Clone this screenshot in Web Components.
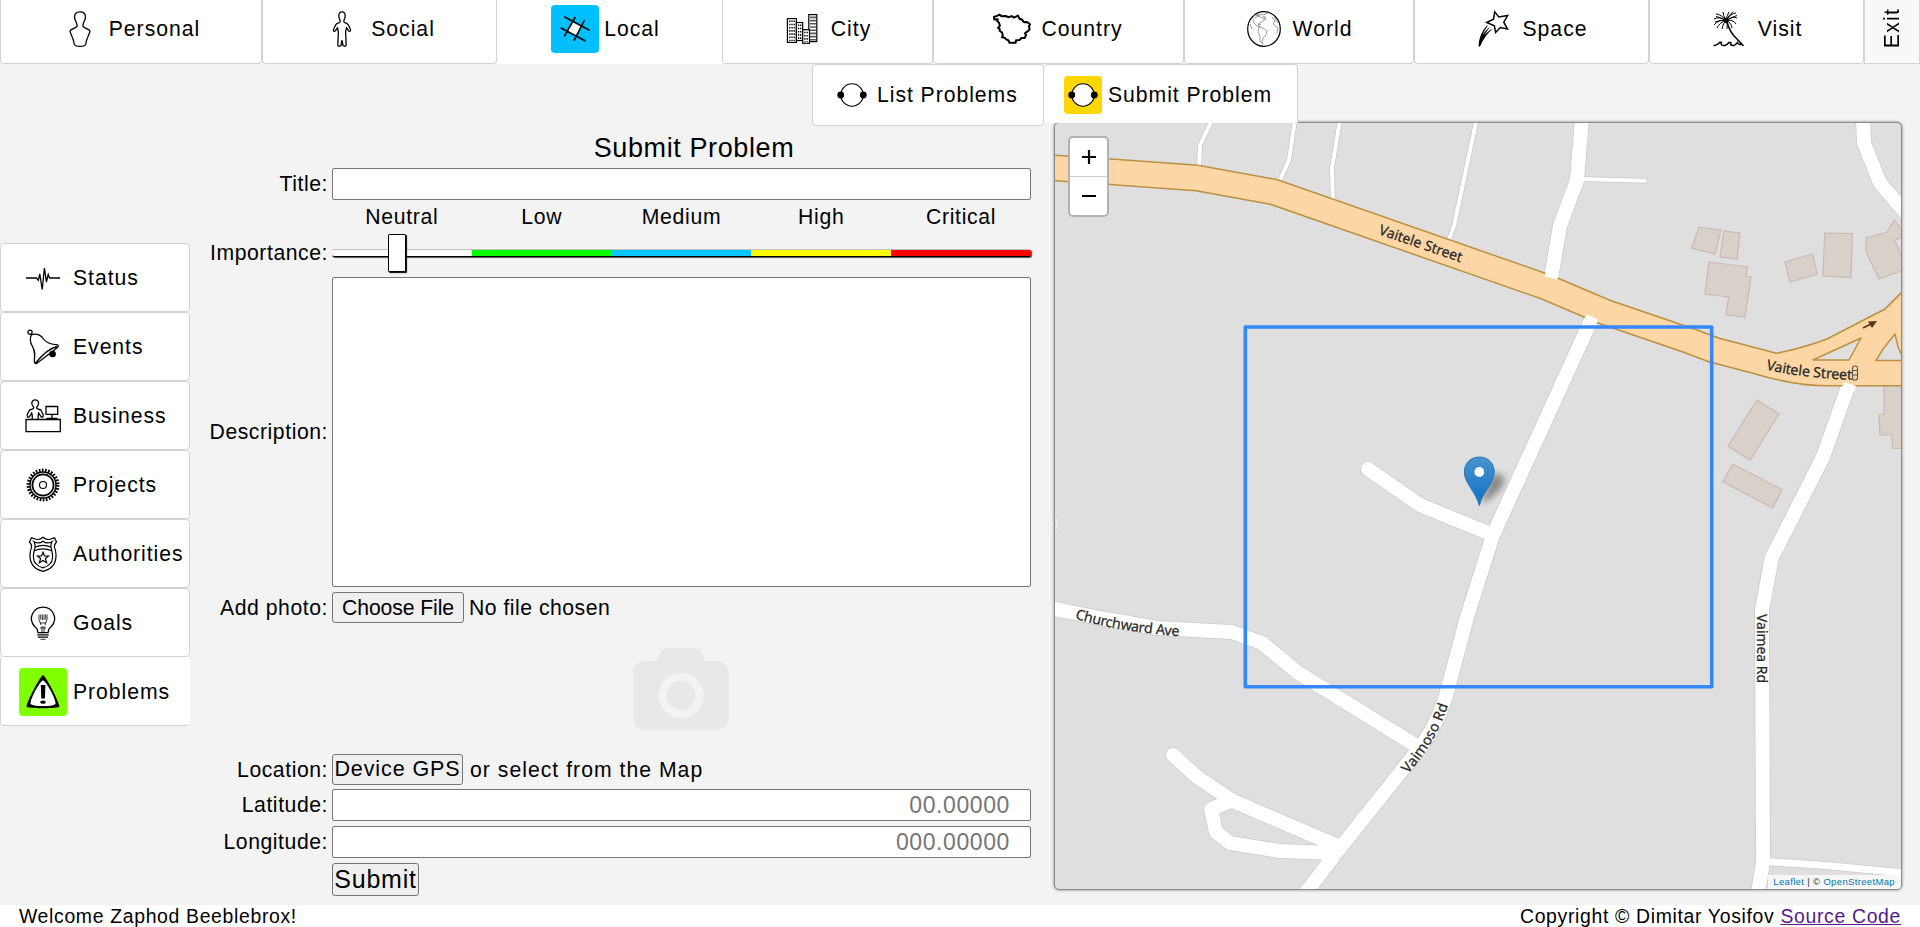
<!DOCTYPE html>
<html lang="en">
<head>
<meta charset="utf-8">
<title>Submit Problem</title>
<style>
html,body{margin:0;height:100%;background:#fff}
body{font-family:"Liberation Sans",Arial,sans-serif;font-size:21.2px;color:#000;overflow:hidden}
</style>
</head>
<body>
<civic-app></civic-app>
<script>
const ICONS = {
personal:'<path fill="#fff" d="M18 .8C21.5.8 23.5 3 23.5 6C23.5 9.5 20.8 11.5 20.8 15C21.5 17.5 28 18 28 20.3C28 22 24.5 27 23.8 33C23.5 35 21 35.3 18 35.3C15 35.3 12.5 35 12.2 33C11.5 27 8 22 8 20.3C8 18 14.5 17.5 15.2 15C15.2 11.5 12.5 9.5 12.5 6C12.5 3 14.5.8 18 .8Z"/>',
social:'<path fill="#fff" d="M18 .8C20.2.8 21.2 2.5 21.2 5C21.2 7.5 19.8 8.5 19.8 10.5C20 12.3 23.5 12 24.4 14L26.6 18.8Q26.4 21 24.8 20L22.5 16.8C21.4 20 21.4 22 21.8 25L22.2 34Q22 35.5 20.4 35.2L19 34.5L18.2 30H17.8L17 34.5L15.6 35.2Q14 35.5 13.8 34L14.2 25C14.6 22 14.6 20 13.5 16.8L11.2 20Q9.6 21 9.4 18.8L11.6 14C12.5 12 16 12.3 16.2 10.5C16.2 8.5 14.8 7.5 14.8 5C14.8 2.5 15.8.8 18 .8Z"/>',
local:'<path fill="#fff" stroke="none" d="M15.8 10.3L24.5 15L19.3 25.1L10.2 20.3Z"/><path stroke-width="1.6" d="M7.3 5.7L32.5 19.3M3.6 16.7L28.4 30M18.3 6L7.3 25.3M27.5 9L17 29.7"/>',
city:'<g stroke-width="1.2" fill="#fff"><rect x="3.4" y="7.6" width="9" height="23.8"/><rect x="12.4" y="11.5" width="6.3" height="18"/><rect x="24.8" y="3.6" width="8" height="27"/><rect x="18.7" y="18.7" width="6.8" height="13.6"/></g><g stroke-dasharray="1.6 1.6" stroke-width="1.3"><path d="M5.8 9.5V30M8 9.5V30M10.2 9.5V30M14.6 13.5V29M16.7 13.5V29M20.9 20.7V31M23.2 20.7V31M27 5.6V30M29 5.6V30M31 5.6V30"/></g>',
country:'<path stroke-width="2" stroke-linejoin="round" fill="#fff" d="M0 5.9L3 4.9L5.5 3.6L7.5 5.2L11.7 4.9L14 6.2L17.8 5.1L20 6.6L24 4.6L25.5 7.7L27.8 8.5L30 11.2L33 11L36 13.2L35 15.5L35.6 18.5L33.5 20.4L31 22.3L32 24L30.6 27.1L27.5 27L25.5 29.1L22 29.3L21.6 31.8H15.5L14.6 29.5L12.3 28.3L10.5 26.8L8 26.3L8.8 24L7.9 21.3L5.8 20L5.6 17.9L4 17L5.9 14.8L5 11.7L3.2 10L3.7 8.2L.4 8.6Z"/>',
world:'<ellipse cx="18" cy="18" rx="16.3" ry="17.3" fill="#fff" stroke-width="1.2"/><path stroke="#777" stroke-width=".7" d="M7 5L12 3L17 4L22 2M8 7L13 5L16 7L18 5L20 8L17 10L14 12L12 14L14 16L11 15L8 12L7 8M13 16L17 17L21 20L20 24L17 27L16 31L17 33L14 30L14 25L12 21Z M26 6L29 10L27 13L32 17L31 22M28 6L32 12M4 13L6 18"/><path stroke="#999" d="M10 4L14 5M12 13L15 14M17 8L19 7"/>',
space:'<path fill="#fff" stroke-width="1.5" d="M19.7.9L23.8 6L32.6 4.6L28.8 11.2L32.4 18L25.3 16.6L20.6 21.4L19.4 14.8L11.6 11.5L18.5 8.2Z"/><path fill="#000" stroke="none" d="M3.5 35.5Q4 23 11.5 15L13 14.2Q8.5 21 7.5 24Q12 17.5 15.5 15.8Q11 21 9.6 24Q14 19 17.8 17.8Q10 24 5 35.5Z"/>',
visit:'<g stroke-width="1"><path d="M15 9.5Q20 2 25 2M15 9.5Q22 5 26 7M15 9.5Q22 8 25 13M15 9.5Q20 11 21 17M15 9.5Q17 12 16 18M15 9.5Q12 12 11 18M15 9.5Q9 11 6 17M15 9.5Q8 8 3 14M15 9.5Q8 5 3 8M15 9.5Q10 3 5 3M15 9.5Q12 4 12 1M15 9.5Q16 4 18 1M15 9.5Q9 6 5 5.5M15 9.5Q9 9 4 11M15 9.5Q18 4 22 .8M15 9.5Q21 6 26 4.5"/><circle cx="15" cy="9.5" r="2.3" fill="#000"/></g><path stroke-width="1.5" d="M16 11Q19 22 26 28Q29.5 31.5 32.5 35M2.5 34.8Q7 34 9 31.3Q11.5 31 10 32.8Q10.5 35 14 34.5Q16 34 18 31.5Q21 31 19.5 33Q20 35 23 34.5Q26 32.5 26.5 31.5Q28 34.3 30 33"/>',
dots:'<circle cx="18" cy="18" r="11.2" fill="#fff" stroke-width="1.1"/><circle cx="6.7" cy="18" r="3.4" fill="#000" stroke="none"/><circle cx="29.3" cy="18" r="3.4" fill="#000" stroke="none"/>',
status:'<path stroke-width="1.3" d="M1 18H11.5L13.3 20.3L14.8 14L17.2 29.5L19.4 8L21.4 22L23.2 14.5L24.6 18H35"/>',
events:'<circle cx="5" cy="3.2" r="2.1"/><path fill="#fff" d="M6.5 5.7C11 4.5 15 5 18.5 10C22 15 28 15.3 31.5 15.7Q34.5 16.5 32.5 18.5L12 34.3Q9.5 35.5 9.3 32C9.8 26 10.5 23 7.5 17.5C4.5 12.5 5 8.5 6.5 5.7ZM32 17.5Q22 20 10.5 34"/><circle cx="27.6" cy="25" r="3.3" fill="#000" stroke="none"/>',
business:'<path d="M1 21.5H35.3V33.6H1Z M7.2 21C7.8 18.5 7.3 17 6.7 15L4.3 18.8Q1.8 20 2.3 16.5L4.5 12Q9 11 8.8 9.5C7.5 8 6.8 7 6.8 5.3C6.8 .8 13.6.8 13.6 5.3C13.6 7 12.9 8 11.6 9.5Q11.4 11 15.9 12L18.1 16.5Q18.6 20 16.1 18.8L13.7 15C13.1 17 12.6 18.5 13.2 21M21 8.5H32.7V16.3H21ZM26.9 16.3V20M21.5 20.3H32.5" fill="#fff"/>',
projects:'<circle cx="18" cy="18" r="14.8" stroke-width="3.2" stroke-dasharray="1.65 1.45"/><circle cx="18" cy="18" r="13" stroke-width="1.4"/><circle cx="18" cy="18" r="10.6" stroke-width="1.7" fill="#fff"/><circle cx="18" cy="18" r="3.5" stroke-width="1.1"/>',
authorities:'<g fill="none" stroke-width="1.2"><path d="M18 1.3Q14 5 9 2.5L6.5 1.8L4.5 6Q8 10 5.6 14Q4 22 6.5 27Q9 33 18 35.3Q27 33 29.5 27Q32 22 30.4 14Q28 10 31.5 6L29.5 1.8L27 2.5Q22 5 18 1.3Z"/><path d="M9 5.7Q11 9 9.3 14Q7 24 10.7 27.5Q13 30.5 18 31.8Q23 30.5 25.3 27.5Q29 24 26.7 14Q25 9 27 5.7Q22 8.5 18 5.2Q14 8.5 9 5.7ZM9.8 11.3Q18 7.5 26.2 11.3M9.2 14.8Q18 11 26.8 14.8"/><path d="M18 16.3L19.5 20H23.5L20.4 22.5L21.6 26.7L18 24.4L14.4 26.7L15.6 22.5L12.5 20H16.5Z"/></g>',
goals:'<path d="M12.7 27Q13 24.5 9.5 21.2C2.5 13.2 8.3 2.2 18 2.2C27.7 2.2 33.5 13.2 26.5 21.2Q23 24.5 23.3 27M12.3 27.6H23.7M12.3 29.8H23.7M13 32.2H23" fill="none"/><path stroke-width=".8" d="M15.5 34.3H20.5M14 9.5V14.5M15.7 9.5V14.5M17.3 9.5V15M19 9.5V15M20.7 9.5V14.5M22 9.5V14.5M14 14.5L16 20M22 14.5L20 20M15 18H21M17 21V27M19 21V27M15 23H21"/>',
problems:'<path fill="#000" stroke="none" d="M18 1C20 1 34 27 34.5 32.8C34.7 34.7 1.3 34.7 1.5 32.8C2 27 16 1 18 1Z"/><path fill="#fff" stroke="none" d="M18 6.3C21 7.5 29.5 22 30.6 29.4C31 32.8 5 32.8 5.4 29.4C6.5 22 15 7.5 18 6.3Z"/><path fill="#000" stroke="none" d="M15.8 11H20.4L19.9 24.5H16.3Z"/><ellipse cx="18" cy="28.2" rx="2.8" ry="1.6" fill="#000" stroke="none"/>'
};
function define(name, html){
  const t=document.createElement('template'); t.innerHTML=html;
  customElements.define(name, class extends HTMLElement{
    constructor(){super();this.attachShadow({mode:'open'}).append(t.content.cloneNode(true));}
    connectedCallback(){const s=this.shadowRoot.querySelector('svg[data-icon]');if(s)s.innerHTML=ICONS[this.getAttribute('icon')];}
  });
}
const SVG='<svg data-icon viewBox="0 0 36 36" fill="none" stroke="#000" stroke-width="1.3"></svg>';

define('top-tab',`<style>
:host{display:flex;box-sizing:border-box;height:64px;align-items:center;justify-content:center;gap:5px;padding:0 6px 5px 0;background:#fff;border:1px solid #d3d3d3;border-top:0;border-radius:0 0 4px 4px;letter-spacing:1px;white-space:nowrap}
i{width:48px;height:48px;border-radius:4px;display:flex;align-items:center;justify-content:center}
svg{width:36px;height:36px;overflow:visible}
:host([active]){border-color:#fff;border-radius:0;padding-right:8px}
:host([active]) i{background:#00bfff}
</style><i>${SVG}</i><span><slot></slot></span>`);

define('exit-tab',`<style>
:host{display:flex;box-sizing:border-box;height:64px;align-items:center;justify-content:center;background:#f8f8f8;border:1px solid #d3d3d3;border-top:0;padding-bottom:6px;letter-spacing:1.2px}
span{writing-mode:vertical-rl;transform:rotate(180deg)}
</style><span><slot></slot></span>`);

define('sub-tab',`<style>
:host{display:flex;box-sizing:border-box;height:62px;align-items:center;gap:6px;padding:0 0 1px 20px;background:#fff;border:1px solid #d3d3d3;border-radius:4px;letter-spacing:.95px;white-space:nowrap}
i{width:38px;height:38px;border-radius:4px;display:flex;align-items:center;justify-content:center}
svg{width:36px;height:36px}
:host([active]){height:59px;padding-bottom:0;padding-top:2px;border-width:1px 1px 0 0;border-radius:4px 4px 0 0;padding-left:20px}
:host([active]) i{background:#ffd700}
</style><i>${SVG}</i><span><slot></slot></span>`);

define('side-tab',`<style>
:host{display:flex;box-sizing:border-box;height:69px;align-items:center;gap:6px;padding:0 0 0 18px;background:#fff;border:1px solid #d3d3d3;border-radius:4px;letter-spacing:.95px;white-space:nowrap}
i{width:48px;height:48px;border-radius:4px;display:flex;align-items:center;justify-content:center;flex:none}
svg{width:36px;height:36px}
:host([active]){border-right-color:#fff;border-top-color:#fff}
:host([active]) i{background:#7fff00}
</style><i>${SVG}</i><span><slot></slot></span>`);

define('form-row',`<style>
:host{display:grid;grid-template-columns:328px 699px;column-gap:4px;align-items:center}
label{text-align:right;letter-spacing:.55px}
</style><label><slot name="label"></slot></label><div><slot></slot></div>`);

define('text-field',`<style>
:host{display:block;box-sizing:border-box;height:var(--h,32px);background:#fff;border:1px solid #767676;border-radius:2px;color:#757575;font-size:23px;letter-spacing:.6px;text-align:right;padding-right:20px;line-height:31px}
</style><slot></slot>`);

define('push-button',`<style>
:host{display:inline-block}
button{box-sizing:border-box;display:block;width:var(--w);height:var(--h,31px);padding:0;border:1px solid #767676;border-radius:3px;background:#efefef;font:inherit;letter-spacing:inherit;color:#000;white-space:nowrap;line-height:1}
</style><button><slot></slot></button>`);

define('importance-scale',`<style>
:host{display:block;width:699px}
.names{display:grid;grid-template-columns:repeat(5,1fr);text-align:center;letter-spacing:.7px}
</style><div class="names"><span>Neutral</span><span>Low</span><span>Medium</span><span>High</span><span>Critical</span></div>`);

define('importance-slider',`<style>
:host{display:block;width:699px;height:38px;position:relative}
.track{position:absolute;top:15px;left:0;right:0;height:8px;box-sizing:border-box;border-top:1px solid #c0c0c0;border-bottom:1px solid #000;border-radius:2px;box-shadow:1px 1px 1px #555;background:linear-gradient(90deg,#fff 20%,#0f0 20% 40%,#00c8ff 40% 60%,#ff0 60% 80%,#f00 80%)}
.thumb{position:absolute;left:56px;top:0;width:18px;height:38px;box-sizing:border-box;background:#fff;border:1px solid #000;border-radius:1px;box-shadow:1px 1px 1px #000}
</style><div class="track"></div><div class="thumb"></div>`);

define('problem-form',`<style>
:host{display:block;width:1031px;padding-top:69px;box-sizing:border-box;letter-spacing:.5px}
h1{font-size:27px;font-weight:400;letter-spacing:.6px;margin:0 0 0 357px;text-align:center;line-height:30px;height:35px}
form-row{height:32px}
.names{height:34px}.slide{height:38px;margin-bottom:5px}
.area{height:310px;padding-right:0}
.photo{height:31px;margin-top:5px}
.cam{display:flex;justify-content:center;margin-left:331px;height:131px}
.cam svg{width:96px;height:82px;margin-top:25px}
.loc{height:31px}.inline{display:flex;align-items:center;gap:5px}
.map-hint{letter-spacing:1.02px}
</style>
<h1>Submit Problem</h1>
<form-row><span slot="label">Title:</span><text-field></text-field></form-row>
<form-row class="names"><importance-scale></importance-scale></form-row>
<form-row class="slide"><span slot="label">Importance:</span><importance-slider></importance-slider></form-row>
<form-row class="area"><span slot="label">Description:</span><text-field style="--h:310px"></text-field></form-row>
<form-row class="photo"><span slot="label">Add photo:</span><div class="inline"><push-button style="--w:132px;letter-spacing:-.1px">Choose File</push-button><span>No file chosen</span></div></form-row>
<div class="cam"><svg viewBox="0 0 96 82"><path fill="#e8e8e8" d="M12 13H22Q24 13 25 10Q27 0 36 0H61Q69 0 71 10Q72 13 74 13H84Q96 14 96 26V69Q96 81 84 82H12Q0 81 0 69V26Q0 14 12 13Z"/><circle cx="48" cy="47.5" r="18.5" fill="none" stroke="#f3f3f3" stroke-width="8"/></svg></div>
<form-row class="loc"><span slot="label">Location:</span><div class="inline" style="gap:7px"><push-button style="--w:131px;font-size:21.5px;letter-spacing:.9px">Device GPS</push-button><span class="map-hint">or select from the Map</span></div></form-row>
<form-row style="margin-top:4px"><span slot="label">Latitude:</span><text-field>00.00000</text-field></form-row>
<form-row style="margin-top:5px"><span slot="label">Longitude:</span><text-field>000.00000</text-field></form-row>
<form-row style="margin-top:5px;height:33px"><push-button style="--w:87px;--h:33px;font-size:25px;letter-spacing:.75px">Submit</push-button></form-row>`);

define('street-map',`<style>
:host{display:block;box-sizing:border-box;position:relative;width:848px;height:768px;border:1px solid #8c8c8c;border-radius:5px;background:#dfdfdf;box-shadow:0 0 3px rgba(0,0,0,.5);overflow:hidden}
.map{display:block;width:846px;height:766px}
.zoom{position:absolute;left:13px;top:13px;width:37px;background:#fff;border:2px solid #b2b2b2;border-radius:5px;height:77px}
.zoom span{display:flex;height:38px;align-items:center;justify-content:center}
.zoom span+span{border-top:1px solid #ccc}
.zoom svg{width:16px;height:16px}
.attr{position:absolute;right:0;bottom:0;background:rgba(255,255,255,.7);padding:0 6px 0 5px;font-size:9.5px;line-height:14px;letter-spacing:.35px;white-space:nowrap;color:#333}
.attr a{color:#0078a8;text-decoration:none}
</style>
<svg class="map" viewBox="1055 123 846 766">
<defs>
<g id="roads" fill="none" stroke-linejoin="round">
<g class="thin"><path d="M1212 120L1200 145L1198.7 172M1295 120L1289 160L1277 187M1340 120L1332 168L1333 205M1476.5 120L1454 226L1447 245M1580 179L1645 180.7" stroke-linecap="round"/></g>
<g class="wide"><path d="M1582 118L1577 180L1560 226L1550 284M1863 118L1864 143L1880 183L1910 218M1598 305L1493 535L1467 617L1447 692Q1441 716 1423 744L1340 848L1301 899M1173 755L1197 777L1233 801L1340 847M1368 469L1420 505L1493 535M1045 607L1100 618L1157 628L1232 632L1262 643L1297 672L1415 745M1231 801L1211 809L1216 832L1230 843L1280 851L1333 853M1851 378L1823 457L1771.7 558L1762 610L1763 862L1757 900" stroke-linecap="round"/><circle cx="1051" cy="523" r=".5"/></g>
<g class="mid"><path d="M1764 861.5L1820 865L1905 873"/></g>
</g>
<filter id="b" x="-50%" y="-50%" width="200%" height="200%"><feGaussianBlur stdDeviation="3"/></filter>
<linearGradient id="m" x2="0" y2="1"><stop stop-color="#4594cf"/><stop offset="1" stop-color="#126fc6"/></linearGradient>
<path id="p2" d="M1766 369.5Q1800 378 1858 380"/><path id="p3" d="M1075 618.5Q1120 632.5 1190 637"/><path id="p4" d="M1408 774Q1440 737 1450 698"/>
</defs>
<style>
.case .thin{stroke:#c8c8c8;stroke-width:5.5}.case .wide{stroke:#cbcbcb;stroke-width:15.5}.case .mid{stroke:#cbcbcb;stroke-width:8.5}
.fill .thin{stroke:#fff;stroke-width:4}.fill .wide{stroke:#fff;stroke-width:14}.fill .mid{stroke:#fff;stroke-width:7}
text{font-family:"Noto Sans","Open Sans",sans-serif;font-size:14.3px;fill:#2a2a2a;stroke:#2a2a2a;stroke-width:.25px;letter-spacing:0}
</style>
<g fill="#d9d0c9" stroke="#c8bab0" stroke-width="1.2">
<path d="M1699 227L1721 230L1715 254L1691.5 248ZM1724 231L1740 233L1737 259L1720 257ZM1709 262L1747.6 267L1746 276L1751 277L1745 317L1726 315L1728.7 297L1705 294ZM1785 262L1812.5 254L1817.5 274L1790 282ZM1824.7 233L1852.4 233.7L1851 277.7L1823 276ZM1866 238L1887 232L1894.6 220L1904 232V237L1894.6 240L1904 260V270L1879 279L1866 252ZM1757 400L1779 414L1750 460.5L1728 446ZM1732.7 464L1782 489.6L1772.7 508L1723 482ZM1884 380V414.5H1879L1880 435H1891.7L1892.7 448.5H1910V380Z"/></g>
<g class="case" id="c"></g><g class="fill" id="f"></g>
<path fill="none" stroke="#bb9140" stroke-width="27" stroke-linejoin="round" d="M1040 167L1100 171L1197 178L1274 192L1546 287L1605 312L1690 341L1714 350L1760 362Q1797 373 1827 373H1920"/>
<path fill="#fcd6a4" stroke="#bb9140" stroke-width="1.6" d="M1770 354L1778 353Q1803 348 1827 339L1885 309L1904 290V375H1800Z"/>
<path fill="none" stroke="#fcd6a4" stroke-width="24" stroke-linejoin="round" d="M1040 167L1100 171L1197 178L1274 192L1546 287L1605 312L1690 341L1714 350L1760 362Q1797 373 1827 373H1920"/>
<path fill="#dfdfdf" stroke="#bb9140" stroke-width="1.5" stroke-linejoin="round" d="M1813 360L1861 338L1849 360ZM1876 360.5L1883 349L1895 334L1898 347L1904 360.5Z"/>
<path stroke="#fff" stroke-width="13" d="M1552.5 272L1551 278M1592.5 317L1589.5 323.5M1850 384L1848 390"/>
<path fill="none" stroke="#54390e" stroke-width="1.6" d="M1863 328L1871 324"/><path fill="#54390e" d="M1868 321.5L1877 321L1872 328Z"/>
<text transform="translate(1378 234) rotate(19)" textLength="87" lengthAdjust="spacingAndGlyphs">Vaitele Street</text>
<text><textPath href="#p2" textLength="87">Vaitele Street</textPath></text>
<g fill="none" stroke="#555" stroke-width="1.1"><rect x="1852.5" y="366" width="5" height="14" rx="2"/><path d="M1852 370.5H1858M1852 375H1858"/></g>
<text><textPath href="#p3" textLength="106">Churchward Ave</textPath></text>
<text><textPath href="#p4" textLength="80">Vaimoso Rd</textPath></text>
<text transform="translate(1757 614) rotate(90)" textLength="69" lengthAdjust="spacingAndGlyphs">Vaimea Rd</text>
<rect x="1245.3" y="327" width="466.4" height="359.7" fill="none" stroke="#3388ff" stroke-width="3.6" stroke-linejoin="round"/>
<path d="M1481 504L1490 479Q1498 468 1504 478Q1506 490 1481 504Z" fill="#000" opacity=".38" filter="url(#b)"/>
<path fill="url(#m)" stroke="#2e78b5" stroke-width="1" d="M1479.3 505.5C1476 492 1464.3 483 1464.3 472C1464.3 463 1471 457 1479.3 457S1494.3 463 1494.3 472C1494.3 483 1482.6 492 1479.3 505.5Z"/><circle cx="1479.3" cy="472" r="4.9" fill="#fff"/>
</svg>
<div class="zoom"><span><svg viewBox="0 0 16 16"><path d="M8 1V15M1 8H15" stroke="#000" stroke-width="2.2"/></svg></span><span><svg viewBox="0 0 16 16"><path d="M1 8H15" stroke="#000" stroke-width="2.2"/></svg></span></div>
<div class="attr"><a>Leaflet</a> | © <a>OpenStreetMap</a></div>`);
// The road network is drawn twice: first as a casing, then as the white surface.
customElements.define('road-map', class extends customElements.get('street-map'){
  constructor(){super();const r=this.shadowRoot,g=r.querySelector('#roads');for(const id of['c','f'])r.querySelector('#'+id).append(g.cloneNode(true));}
});

define('civic-app',`<style>
:host{display:grid;grid-template-rows:64px 841px 22px;height:927px;width:1920px}
nav{display:grid;grid-template-columns:262px 235px 225px 211px 251px 230px 235px 215px 56px}
main{background:#f3f3f3;display:grid;grid-template-columns:1054px 848px;position:relative}
.left{display:grid;grid-template-columns:100%}
.left>*{grid-area:1/1}
.side{width:190px;padding-top:179px;align-self:start}
road-map{margin-top:58px}
.sub{position:absolute;left:812px;top:0;display:grid;grid-template-columns:232px 254px;align-items:start}
footer{display:flex;justify-content:space-between;padding:0 19px;font-size:19.4px;letter-spacing:.67px;line-height:22px}
a{color:#551a8b;text-decoration:underline}
</style>
<nav><top-tab icon="personal">Personal</top-tab><top-tab icon="social">Social</top-tab><top-tab icon="local" active>Local</top-tab><top-tab icon="city">City</top-tab><top-tab icon="country">Country</top-tab><top-tab icon="world">World</top-tab><top-tab icon="space">Space</top-tab><top-tab icon="visit">Visit</top-tab><exit-tab>Exit</exit-tab></nav>
<main><div class="left"><problem-form></problem-form><div class="side"><side-tab icon="status">Status</side-tab><side-tab icon="events">Events</side-tab><side-tab icon="business">Business</side-tab><side-tab icon="projects">Projects</side-tab><side-tab icon="authorities">Authorities</side-tab><side-tab icon="goals">Goals</side-tab><side-tab icon="problems" active>Problems</side-tab></div></div>
<road-map></road-map>
<div class="sub"><sub-tab icon="dots">List Problems</sub-tab><sub-tab icon="dots" active>Submit Problem</sub-tab></div></main>
<footer><span>Welcome Zaphod Beeblebrox!</span><span>Copyright © Dimitar Yosifov <a>Source Code</a></span></footer>`);
</script>
</body>
</html>
